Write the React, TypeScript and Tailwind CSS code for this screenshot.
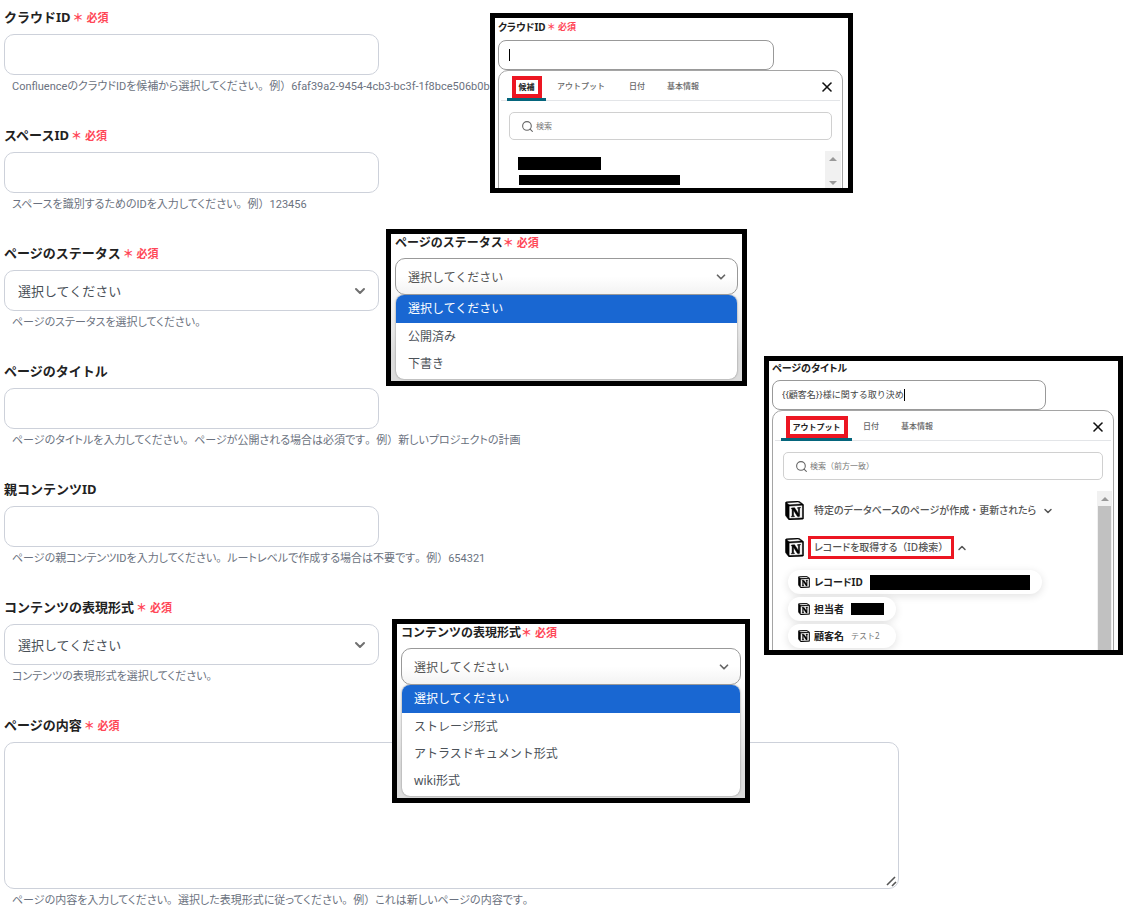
import type { ReactNode } from "react";
import { ChevronDown, ChevronUp, Search, X } from "lucide-react";
import { SiNotion } from "react-icons/si";
import clsx from "clsx";

const PLACEHOLDER = "選択してください";

/* Proportional kana, with the punctuation kept at full width */
function Kana({ text }: { text: string }) {
  return (
    <span className="[font-feature-settings:'palt']">
      {text.split(/([。（）・])/).map((part, i) =>
        i % 2 ? (
          <span key={i} className="[font-feature-settings:normal]">
            {part}
          </span>
        ) : (
          part
        ),
      )}
    </span>
  );
}

type FieldProps = {
  id: string;
  label: string;
  hint: string;
  required?: boolean;
  children: ReactNode;
};

function Field({ id, label, hint, required, children }: FieldProps) {
  return (
    <div>
      <label htmlFor={id} className="flex h-[26px] items-center pt-0.5 text-[13px] font-bold whitespace-nowrap text-[#222]">
        {label}
        {required && <span className="mt-px ml-0.5 text-[11px] text-[#ff4757]">＊ 必須</span>}
      </label>
      <div className="mt-1">{children}</div>
      <p className="mt-0.5 pl-2 font-[Roboto,'Noto_Sans_CJK_JP',sans-serif] text-[11px] leading-5 whitespace-nowrap text-[#6b7280]">
        <Kana text={hint} />
      </p>
    </div>
  );
}

function TextField(props: Omit<FieldProps, "children">) {
  return (
    <Field {...props}>
      <input
        id={props.id}
        type="text"
        className="block h-[41px] w-full max-w-[375px] rounded-[10px] border border-[#cdd1da] px-3 text-[13px]"
      />
    </Field>
  );
}

function SelectField({ options, ...props }: Omit<FieldProps, "children"> & { options: string[] }) {
  return (
    <Field {...props}>
      <div className="relative w-full max-w-[375px]">
        <select
          id={props.id}
          className="block h-[41px] w-full appearance-none rounded-[10px] border border-[#cdd1da] bg-white px-[13px] pt-0.5 text-[13px] text-[#495057]"
        >
          <option>{PLACEHOLDER}</option>
          {options.map((option) => (
            <option key={option}>{option}</option>
          ))}
        </select>
        <ChevronDown className="pointer-events-none absolute top-[13px] right-[11px] size-4 text-[#707070]" strokeWidth={3} />
      </div>
    </Field>
  );
}

function Callout({ className, children }: { className: string; children: ReactNode }) {
  return <section className={clsx("absolute overflow-hidden border-[5px] border-black bg-white", className)}>{children}</section>;
}

/* Open drop-down with its option list */
function SelectCallout({ id, label, options, className }: { id: string; label: string; options: string[]; className: string }) {
  return (
    <Callout className={className}>
      <label htmlFor={id} className="flex h-[18px] items-center pl-1 text-[12px] font-bold whitespace-nowrap text-[#222]">
        {label}
        <span className="text-[11px] text-[#ff4757]">＊ 必須</span>
      </label>
      <div className="bg-gradient-to-b from-white from-20% to-[#dcdcdc] to-80% px-1 pt-1.5 pb-0.5">
        <div className="relative">
          <select
            id={id}
            className="block h-[37px] w-full appearance-none rounded-[10px] border border-[#999] bg-gradient-to-b from-white from-50% to-[#f3f3f3] px-3 pt-0.5 text-[12px] text-[#555]"
          >
            <option>{PLACEHOLDER}</option>
            {options.map((option) => (
              <option key={option}>{option}</option>
            ))}
          </select>
          <ChevronDown className="pointer-events-none absolute top-3 right-2.5 size-3.5 text-[#666]" strokeWidth={3} />
        </div>
        <ul role="listbox" aria-label={label} className="mx-px overflow-hidden rounded-lg bg-white pb-0.5 text-[12px] text-[#4b5158] shadow-[0_0_2px_#777]">
          <li role="option" aria-selected="true" className="flex h-7 items-center bg-[#1967d2] pl-3 text-white">
            {PLACEHOLDER}
          </li>
          {options.map((option) => (
            <li key={option} role="option" aria-selected="false" className="flex h-[27px] items-center pl-3">
              {option}
            </li>
          ))}
        </ul>
      </div>
    </Callout>
  );
}

function Tab({ children, active, className }: { children: ReactNode; active?: boolean; className?: string }) {
  return (
    <button
      type="button"
      role="tab"
      aria-selected={!!active}
      className={clsx(
        "flex h-[30px] items-center border-b-[3px] px-[5px] text-[8px] whitespace-nowrap",
        active ? "border-[#04657c] font-bold text-[#222]" : "border-transparent pt-[3px] font-medium text-[#666]",
        className,
      )}
    >
      {active ? (
        <span className="mt-1 flex h-[22px] items-center border-4 border-[#ec1622] px-[3px]">{children}</span>
      ) : (
        children
      )}
    </button>
  );
}

function SearchBox({ placeholder }: { placeholder: string }) {
  return (
    <div className="mx-2.5 mt-[11px] flex h-7 items-center rounded-[5px] border border-[#d0d0d0] pl-[11px]">
      <Search className="size-[13px] shrink-0 text-[#666]" strokeWidth={2} />
      <input
        type="search"
        aria-label={placeholder}
        placeholder={placeholder}
        className="ml-0.5 w-full bg-transparent text-[8px] outline-none placeholder:text-[#777]"
      />
    </div>
  );
}

function PickerHead({ children }: { children: ReactNode }) {
  return (
    <div className="mx-0.5 flex h-[30px] border-b border-[#e3e5e8] pl-1.5" role="tablist">
      {children}
      <button type="button" aria-label="閉じる" className="mr-[5px] ml-auto pt-[3px] text-[#111]">
        <X className="size-4" strokeWidth={2.4} />
      </button>
    </div>
  );
}

function Arrow({ up }: { up?: boolean }) {
  return (
    <svg viewBox="0 0 8 4" className="h-1 w-2" fill="#999" aria-hidden="true">
      <path d={up ? "M0 4 4 0l4 4z" : "M0 0l4 4 4-4z"} />
    </svg>
  );
}

function Redacted({ className }: { className: string }) {
  return <span aria-hidden="true" className={clsx("block bg-black", className)} />;
}

function Pill({ name, children }: { name: string; children: ReactNode }) {
  return (
    <li className="flex h-6 w-fit items-center rounded-full bg-white pr-3 pl-2.5 whitespace-nowrap shadow-[0_2px_8px_rgba(0,0,0,0.12)]">
      <SiNotion className="mr-1 size-3 text-black" strokeWidth={0.6} />
      <span className="mr-[7px] text-[10px] font-bold text-[#222]">
        <Kana text={name} />
      </span>
      {children}
    </li>
  );
}

function CloudIdCallout() {
  return (
    <Callout className="top-[13px] left-[490px] h-[180px] w-[363px]">
      <label htmlFor="cloud-demo" className="flex h-[18px] items-center pl-[3px] text-[10px] font-bold text-[#222]">
        <Kana text="クラウドID" />
        <span className="ml-px text-[9px] text-[#ff4757]">＊ 必須</span>
      </label>
      <div className="mt-1 ml-[3px] flex h-[30px] w-[276px] items-center rounded-[8px] border border-[#999] pl-2.5">
        <span className="h-3 w-px bg-black" />
        <input id="cloud-demo" type="text" className="w-full outline-none" />
      </div>
      <div className="mr-[5px] ml-[3px] h-[130px] rounded-t-[10px] border border-[#a5a5a5]">
        <PickerHead>
          <Tab active className="w-[39px] justify-center">候補</Tab>
          <Tab className="ml-1.5">アウトプット</Tab>
          <Tab className="ml-3.5">日付</Tab>
          <Tab className="ml-3">基本情報</Tab>
        </PickerHead>
        <SearchBox placeholder="検索" />
        <div className="mt-[11px] mr-px flex justify-between">
          <div className="pt-1.5 pl-[19px]">
            <Redacted className="h-[13px] w-[83px]" />
            <Redacted className="mt-[5px] ml-px h-2.5 w-[161px]" />
          </div>
          <div className="flex h-[38px] w-4 flex-col items-center justify-between bg-[#f1f1f1] pt-1.5 pb-1">
            <Arrow up />
            <Arrow />
          </div>
        </div>
      </div>
    </Callout>
  );
}

function PageTitleCallout() {
  return (
    <Callout className="top-[356px] left-[764px] h-[299px] w-[359px]">
      <label htmlFor="title-demo" className="flex h-[15px] items-center pl-[3px] text-[10px] font-bold text-[#222]">
        <Kana text="ページのタイトル" />
      </label>
      <div className="mt-1 ml-[3px] flex h-[30px] w-[274px] items-center rounded-[8px] border border-[#999] pl-[9px]">
        <input
          id="title-demo"
          type="text"
          defaultValue="{{顧客名}}様に関する取り決め"
          className="field-sizing-content text-[9px] text-[#444] outline-none"
        />
        <span className="h-3 w-px bg-black" />
      </div>
      <div className="mr-1 ml-[3px] h-[245px] rounded-t-[10px] border border-[#a5a5a5]">
        <PickerHead>
          <Tab active className="w-[71px] justify-center">アウトプット</Tab>
          <Tab className="ml-1.5">日付</Tab>
          <Tab className="ml-3">基本情報</Tab>
        </PickerHead>
        <SearchBox placeholder="検索（前方一致）" />
        <div className="mt-[11px] mr-px flex">
          <div className="min-w-0 flex-1 pt-2.5 pl-3">
            <button type="button" className="flex h-[19px] items-center text-[10px] font-medium whitespace-nowrap text-[#555]">
              <SiNotion className="mr-2.5 size-[19px] text-black" strokeWidth={0.6} />
              <Kana text="特定のデータベースのページが作成・更新されたら" />
              <ChevronDown className="ml-1.5 size-3" strokeWidth={3} />
            </button>
            <button type="button" className="mt-[18px] flex h-[19px] items-center text-[10px] font-medium whitespace-nowrap text-[#555]">
              <SiNotion className="mr-1 size-[19px] text-black" strokeWidth={0.6} />
              <span className="flex h-[23px] items-center border-[3px] border-[#ec1622] px-[3px]">
                <Kana text="レコードを取得する（ID検索）" />
              </span>
              <ChevronUp className="ml-0.5 size-3" strokeWidth={3} />
            </button>
            <ul className="mt-[13px] ml-[3px] flex flex-col gap-[3px]">
              <Pill name="レコードID">
                <Redacted className="h-[15px] w-40" />
              </Pill>
              <Pill name="担当者">
                <Redacted className="h-3 w-[33px]" />
              </Pill>
              <Pill name="顧客名">
                <span className="pr-1 text-[8px] text-[#777]">テスト2</span>
              </Pill>
            </ul>
          </div>
          <div className="flex h-40 w-[15px] flex-col items-center bg-[#f1f1f1] pt-1.5">
            <Arrow up />
            <span className="mt-[5px] w-[13px] flex-1 bg-[#c1c1c1]" />
          </div>
        </div>
      </div>
    </Callout>
  );
}

export default function App() {
  return (
    <main className="relative min-h-screen bg-white px-1 pt-1 pb-1 font-['Noto_Sans','Noto_Sans_CJK_JP',sans-serif]">
      <form className="flex flex-col gap-[25px]">
        <TextField
          id="cloud-id"
          label="クラウドID"
          required
          hint="ConfluenceのクラウドIDを候補から選択してください。例）6faf39a2-9454-4cb3-bc3f-1f8bce506b0b"
        />
        <TextField id="space-id" label="スペースID" required hint="スペースを識別するためのIDを入力してください。例）123456" />
        <SelectField
          id="status"
          label="ページのステータス"
          required
          hint="ページのステータスを選択してください。"
          options={["公開済み", "下書き"]}
        />
        <TextField
          id="title"
          label="ページのタイトル"
          hint="ページのタイトルを入力してください。ページが公開される場合は必須です。例）新しいプロジェクトの計画"
        />
        <TextField
          id="parent-id"
          label="親コンテンツID"
          hint="ページの親コンテンツIDを入力してください。ルートレベルで作成する場合は不要です。例）654321"
        />
        <SelectField
          id="format"
          label="コンテンツの表現形式"
          required
          hint="コンテンツの表現形式を選択してください。"
          options={["ストレージ形式", "アトラスドキュメント形式", "wiki形式"]}
        />
        <Field
          id="body"
          label="ページの内容"
          required
          hint="ページの内容を入力してください。選択した表現形式に従ってください。例）これは新しいページの内容です。"
        >
          <div className="relative w-full max-w-[895px]">
            <textarea id="body" className="block h-[147px] w-full resize-none rounded-[10px] border border-[#cdd1da] p-3 text-[13px]" />
            <svg viewBox="0 0 11 11" className="absolute right-0.5 bottom-0.5 size-[11px]" stroke="#555" strokeWidth="1.6" aria-hidden="true">
              <path d="M1 9 9 1M6 10l4-4" />
            </svg>
          </div>
        </Field>
      </form>

      <CloudIdCallout />
      <SelectCallout
        id="status-demo"
        label="ページのステータス"
        options={["公開済み", "下書き"]}
        className="top-[229px] left-[386px] w-[361px]"
      />
      <PageTitleCallout />
      <SelectCallout
        id="format-demo"
        label="コンテンツの表現形式"
        options={["ストレージ形式", "アトラスドキュメント形式", "wiki形式"]}
        className="top-[619px] left-[392px] w-[358px]"
      />
    </main>
  );
}
